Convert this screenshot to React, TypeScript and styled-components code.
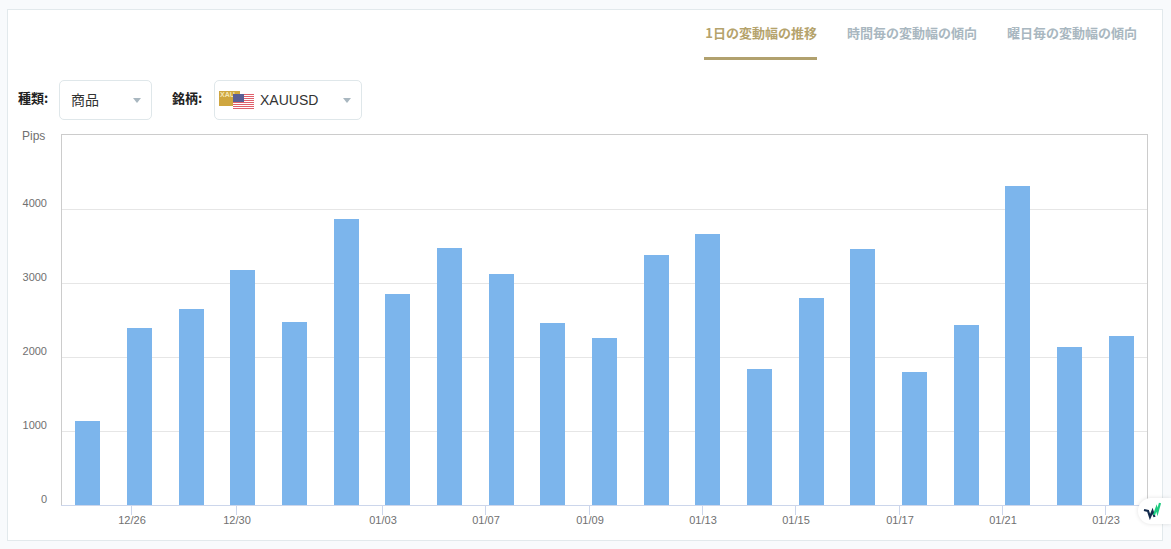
import React from 'react';
import styled, { createGlobalStyle } from 'styled-components';

const GlobalStyle = createGlobalStyle`
  html, body {
    margin: 0;
    padding: 0;
    height: 100%;
    overflow: hidden;
    background: #f8fafc;
  }
  body {
    font-family: "Liberation Sans", "Noto Sans CJK JP", sans-serif;
    color: #333;
  }
`;

const Page = styled.div`
  padding: 9px 8px 8px 7px;
  height: 549px;
  box-sizing: border-box;
  position: relative;
`;

const Card = styled.section`
  background: #fff;
  border: 1px solid #e2e9ec;
  height: 100%;
  box-sizing: border-box;
  display: flex;
  flex-direction: column;
`;

const Tabs = styled.nav`
  display: flex;
  justify-content: flex-end;
  gap: 30px;
  height: 50px;
  padding-right: 24px;
  margin-right: 1px;
`;

const Tab = styled.div<{ $active?: boolean }>`
  font-family: "Noto Sans CJK JP", sans-serif;
  font-size: 13px;
  font-weight: 700;
  line-height: 20px;
  padding-top: 13px;
  padding-left: ${p => (p.$active ? '1px' : '0')};
  box-sizing: border-box;
  height: 50px;
  color: ${p => (p.$active ? '#b5a36c' : '#a9b7c0')};
  border-bottom: 3px solid ${p => (p.$active ? '#b1a16e' : 'transparent')};
`;

const Filters = styled.div`
  display: flex;
  align-items: center;
  margin-top: 20px;
  height: 40px;
  padding-left: 10px;
`;

const Label = styled.label<{ $before: number; $after: number }>`
  font-family: "Noto Sans CJK JP", sans-serif;
  font-size: 13px;
  font-weight: 700;
  color: #222;
  margin-left: ${p => p.$before}px;
  margin-right: ${p => p.$after}px;
  width: 31px;
  white-space: nowrap;
  position: relative;
  top: -3px;
`;

const Select = styled.div<{ $width: number }>`
  width: ${p => p.$width}px;
  height: 40px;
  box-sizing: border-box;
  border: 1px solid #dfe7ea;
  border-radius: 5px;
  display: flex;
  align-items: center;
  padding: 0 10px 0 11px;
  font-size: 14px;
  color: #333;
`;

const SelectText = styled.span`
  flex: 1;
  font-family: "Liberation Sans", "Noto Sans CJK JP", sans-serif;
  line-height: 20px;
`;

const Caret = styled.span`
  width: 0;
  height: 0;
  border-left: 4px solid transparent;
  border-right: 4px solid transparent;
  border-top: 5px solid #a9b7c0;
`;

const PairIcon = styled.svg`
  width: 36px;
  height: 20px;
  margin-left: -7px;
  margin-right: 5px;
  flex: none;
`;

const ChartBox = styled.svg`
  display: block;
  width: 1153px;
  height: 419px;
`;

const Badge = styled.div`
  position: absolute;
  left: 1138px;
  top: 498px;
  width: 33px;
  height: 26px;
  background: #fff;
  border-radius: 13px 0 0 13px;
  box-shadow: 0 0 4px rgba(0, 0, 0, 0.12);
  display: flex;
  align-items: center;
  padding-left: 5px;
  box-sizing: border-box;
`;

const bars = [
  [75, 421], [127, 328], [179, 309], [230, 270], [282, 322], [334, 219], [385, 294],
  [437, 248], [489, 274], [540, 323], [592, 338], [644, 255], [695, 234], [747, 369],
  [799, 298], [850, 249], [902, 372], [954, 325], [1005, 186], [1057, 347], [1109, 336],
];

const xLabels: [number, string][] = [
  [132, '12/26'], [237, '12/30'], [383, '01/03'], [486, '01/07'], [590, '01/09'],
  [703, '01/13'], [796, '01/15'], [900, '01/17'], [1003, '01/21'], [1106, '01/23'],
];

const yLabels: [number, string][] = [
  [207, '4000'], [281, '3000'], [355, '2000'], [429, '1000'], [503, '0'],
];

const grid = [209.5, 283.5, 357.5, 431.5];

const Chart = () => (
  <ChartBox viewBox="8 120 1153 419" fontFamily="Liberation Sans, Arial, sans-serif">
    <rect x="61.5" y="134.5" width="1086" height="371" fill="#fff" stroke="#cccccc" />
    {grid.map(y => (
      <line key={y} x1="62" x2="1147" y1={y} y2={y} stroke="#e6e6e6" />
    ))}
    {bars.map(([x, top]) => (
      <rect key={x} x={x} y={top} width="25" height={505 - top} fill="#7cb5ec" />
    ))}
    <line x1="61" x2="1148" y1="505.5" y2="505.5" stroke="#ccd6eb" />
    {xLabels.map(([x, text]) => (
      <g key={text}>
        <line x1={x - 0.5} x2={x - 0.5} y1="505" y2="515" stroke="#ccd6eb" />
        <text x={x} y="524" fontSize="11" fill="#707070" textAnchor="middle">{text}</text>
      </g>
    ))}
    {yLabels.map(([y, text]) => (
      <text key={text} x="47" y={y} fontSize="11" fill="#707070" textAnchor="end">{text}</text>
    ))}
    <text x="22" y="140" fontSize="12" fill="#707070">Pips</text>
  </ChartBox>
);

export default function App() {
  return (
    <>
      <GlobalStyle />
      <Page>
        <Card>
          <Tabs>
            <Tab $active>1日の変動幅の推移</Tab>
            <Tab>時間毎の変動幅の傾向</Tab>
            <Tab>曜日毎の変動幅の傾向</Tab>
          </Tabs>
          <Filters>
            <Label $before={0} $after={10}>種類:</Label>
            <Select $width={93}>
              <SelectText>商品</SelectText>
              <Caret />
            </Select>
            <Label $before={20} $after={11}>銘柄:</Label>
            <Select $width={148}>
              <PairIcon viewBox="0 0 36 20">
                <rect x="0" y="1" width="21" height="15" fill="#cfa63f" />
                <text x="1" y="7" fontSize="7" fontWeight="700" fill="#f5e7b5" fontFamily="Liberation Sans, sans-serif">XAU</text>
                <rect x="14" y="4" width="21" height="15" fill="#fff" />
                {[0, 2, 4, 6, 8, 10, 12, 14].map(i => (
                  <rect key={i} x="14" y={4 + i} width="21" height="1" fill="#e0606c" />
                ))}
                <rect x="14" y="4" width="11" height="8" fill="#5a5f95" />
              </PairIcon>
              <SelectText>XAUUSD</SelectText>
              <Caret />
            </Select>
          </Filters>
          <Chart />
        </Card>
        <Badge>
          <svg width="20" height="18" viewBox="0 0 20 18" fill="none">
            <path d="M1 8 L5 9 L7 15 L9.5 9 L11.5 15" stroke="#12294b" strokeWidth="2.2" />
            <path d="M11 13 L13.5 6 L14.5 10 L17 1" stroke="#1ecb7f" strokeWidth="2.2" />
          </svg>
        </Badge>
      </Page>
    </>
  );
}
